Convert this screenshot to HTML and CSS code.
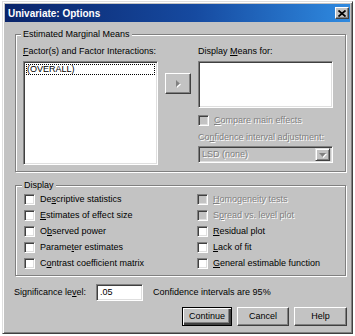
FILE: index.html
```html
<!DOCTYPE html>
<html lang="en">
<head>
  <meta charset="UTF-8">
  <title>Univariate: Options</title>
  <link rel="stylesheet" href="styles.css">
</head>
<body>

<div class="dialog">
  <div class="titlebar">
    <span class="title">Univariate: Options</span>
    <span class="close-btn">
      <svg width="8" height="7" viewBox="0 0 8 7"><path d="M0.5 0.5L7.5 6.5M7.5 0.5L0.5 6.5" stroke="#000" stroke-width="1.7"/></svg>
    </span>
  </div>

  <div class="content">
    <fieldset class="group emm">
      <legend>Estimated Marginal Means</legend>
      <div class="emm-grid">
        <div class="col">
          <div class="label"><u>F</u>actor(s) and Factor Interactions:</div>
          <div class="listbox tall">
            <div class="item focused">(OVERALL)</div>
          </div>
        </div>
        <div class="col mid">
          <div class="arrow-btn">
            <svg width="4" height="7" viewBox="0 0 4 7"><path d="M0 0L4 3.5L0 7z" fill="#808080"/></svg>
          </div>
        </div>
        <div class="col">
          <div class="label">Display <u>M</u>eans for:</div>
          <div class="listbox short"></div>
          <div class="check disabled compare"><span class="box"></span><span><u>C</u>ompare main effects</span></div>
          <div class="label disabled adj">Co<u>n</u>fidence interval adjustment:</div>
          <div class="combo">
            <span class="combo-text">LSD (none)</span>
            <span class="drop-btn">
              <svg width="7" height="4" viewBox="0 0 7 4"><path d="M0 0H7L3.5 4z" fill="#808080"/></svg>
            </span>
          </div>
        </div>
      </div>
    </fieldset>

    <fieldset class="group display">
      <legend>Display</legend>
      <div class="check-grid">
        <div class="check"><span class="box"></span><span>De<u>s</u>criptive statistics</span></div>
        <div class="check"><span class="box"></span><span><u>E</u>stimates of effect size</span></div>
        <div class="check"><span class="box"></span><span>O<u>b</u>served power</span></div>
        <div class="check"><span class="box"></span><span>Parame<u>t</u>er estimates</span></div>
        <div class="check"><span class="box"></span><span>C<u>o</u>ntrast coefficient matrix</span></div>
        <div class="check disabled"><span class="box"></span><span><u>H</u>omogeneity tests</span></div>
        <div class="check disabled"><span class="box"></span><span>S<u>p</u>read vs. level plot</span></div>
        <div class="check"><span class="box"></span><span><u>R</u>esidual plot</span></div>
        <div class="check"><span class="box"></span><span><u>L</u>ack of fit</span></div>
        <div class="check"><span class="box"></span><span><u>G</u>eneral estimable function</span></div>
      </div>
    </fieldset>

    <div class="sig-row">
      <span>Significance le<u>v</u>el:</span>
      <div class="textbox">.05</div>
      <span>Confidence intervals are 95%</span>
    </div>

    <div class="buttons">
      <div class="btn default continue"><span>Continue</span></div>
      <div class="btn cancel"><span>Cancel</span></div>
      <div class="btn help"><span>Help</span></div>
    </div>
  </div>
</div>

</body>
</html>
```

FILE: styles.css
```css
body {
  margin: 0;
  background: #fff;
  font-family: 'Liberation Sans', Arial, sans-serif;
  font-size: 9px;
  line-height: 11px;
  color: #000;
}
u {
  text-decoration-thickness: 1px;
  text-underline-offset: 1px;
}
.dialog {
  margin: 1px 0 0 2px;
  width: 351px;
  height: 333px;
  box-sizing: border-box;
  background: #c3c3c3;
  border: 1px solid;
  border-color: #dfdfdf #404040 #404040 #dfdfdf;
  box-shadow: inset 1px 1px #fff, inset -1px -1px #808080;
  padding: 2px;
}
.titlebar {
  height: 18px;
  display: flex;
  align-items: center;
  justify-content: space-between;
  padding: 0 1px 0 3px;
  background: linear-gradient(90deg, #0a246a 0%, #164aa0 55%, #2f8ae0 100%);
}
.title {
  color: #fff;
  font-weight: bold;
  font-size: 10px;
}
.close-btn {
  width: 14px;
  height: 12px;
  box-sizing: border-box;
  display: flex;
  align-items: center;
  justify-content: center;
  background: #c3c3c3;
  border: 1px solid;
  border-color: #fff #404040 #404040 #fff;
  box-shadow: inset -1px -1px #808080;
}
.content {
  padding: 7px 0 0 10px;
}

/* group boxes */
.group {
  width: 331px;
  box-sizing: border-box;
  margin: 0;
  border: 1px solid #808080;
  box-shadow: 1px 1px 0 #fff, inset 1px 1px 0 #fff;
  min-width: 0;
}
.group legend {
  padding: 0 2px;
  margin-left: -2px;
  background: #c3c3c3;
  line-height: 11px;
}
.emm {
  padding: 6px 0 6px 7px;
}
.display {
  margin-top: 8px;
  padding: 0 0 4px 8px;
}
.emm-grid {
  display: grid;
  grid-template-columns: 135px 26px 135px;
  column-gap: 7px;
}
.col .label {
  margin-bottom: 4px;
}
.col .label.adj {
  margin: 5px 0 3px;
}
.mid {
  padding-top: 27px;
}
.listbox {
  background: #fff;
  box-sizing: border-box;
  border: 1px solid;
  border-color: #808080 #fff #fff #808080;
  box-shadow: inset 1px 1px #404040, inset -1px -1px #dfdfdf;
  padding: 2px;
}
.listbox.tall {
  height: 104px;
}
.listbox.short {
  height: 47px;
}
.item {
  height: 11px;
  padding-left: 1px;
}
.item.focused {
  outline: 1px dotted #000;
  outline-offset: -1px;
  box-sizing: border-box;
  line-height: 10px;
}
.arrow-btn {
  width: 26px;
  height: 21px;
  box-sizing: border-box;
  display: flex;
  align-items: center;
  justify-content: center;
  border: 1px solid;
  border-color: #fff #404040 #404040 #fff;
  box-shadow: inset -1px -1px #808080;
}
.arrow-btn svg {
  filter: drop-shadow(1px 1px 0 #fff);
}

/* checkboxes */
.check {
  display: flex;
  align-items: center;
  gap: 5px;
  height: 16px;
  white-space: nowrap;
}
.check .box {
  width: 11px;
  height: 11px;
  box-sizing: border-box;
  background: #fff;
  border: 1px solid;
  border-color: #808080 #fff #fff #808080;
  box-shadow: inset 1px 1px #404040, inset -1px -1px #dfdfdf;
  flex: none;
}
.check.compare {
  margin-top: 6px;
  height: 13px;
}
.disabled {
  color: #808080;
  text-shadow: 1px 1px 0 #fff;
}
.check.disabled .box {
  background: #c3c3c3;
}
.check-grid {
  display: grid;
  grid-template-columns: 173px 1fr;
  grid-template-rows: repeat(5, 16px);
  grid-auto-flow: column;
}

/* combo */
.combo {
  height: 17px;
  box-sizing: border-box;
  display: flex;
  align-items: center;
  justify-content: space-between;
  background: #c3c3c3;
  border: 1px solid;
  border-color: #808080 #fff #fff #808080;
  box-shadow: inset 1px 1px #404040, inset -1px -1px #dfdfdf;
  padding: 2px 2px 2px 3px;
}
.combo-text {
  color: #808080;
  text-shadow: 1px 1px 0 #fff;
}
.drop-btn {
  width: 15px;
  height: 13px;
  box-sizing: border-box;
  display: flex;
  align-items: center;
  justify-content: center;
  border: 1px solid;
  border-color: #dfdfdf #404040 #404040 #dfdfdf;
  box-shadow: inset 1px 1px #fff, inset -1px -1px #808080;
}
.drop-btn svg {
  filter: drop-shadow(1px 1px 0 #fff);
}

/* bottom */
.sig-row {
  display: flex;
  align-items: center;
  margin: 8px 0 0 -1px;
  height: 17px;
}
.textbox {
  width: 47px;
  height: 17px;
  box-sizing: border-box;
  margin: 0 10px;
  background: #fff;
  border: 1px solid;
  border-color: #808080 #fff #fff #808080;
  box-shadow: inset 1px 1px #404040, inset -1px -1px #dfdfdf;
  padding: 2px 3px;
}
.buttons {
  display: flex;
  justify-content: flex-end;
  gap: 5px;
  margin-top: 6px;
  padding-right: 3px;
}
.btn {
  height: 19px;
  box-sizing: border-box;
  display: flex;
  align-items: center;
  justify-content: center;
  border: 1px solid;
  border-color: #fff #404040 #404040 #fff;
  box-shadow: inset -1px -1px #808080;
}
.btn.default {
  border: 1px solid #000;
  box-shadow: inset 1px 1px #fff, inset -2px -2px #404040, inset -3px -3px #808080;
}
.continue { width: 50px; }
.cancel { width: 52px; }
.help { width: 53px; }
```
